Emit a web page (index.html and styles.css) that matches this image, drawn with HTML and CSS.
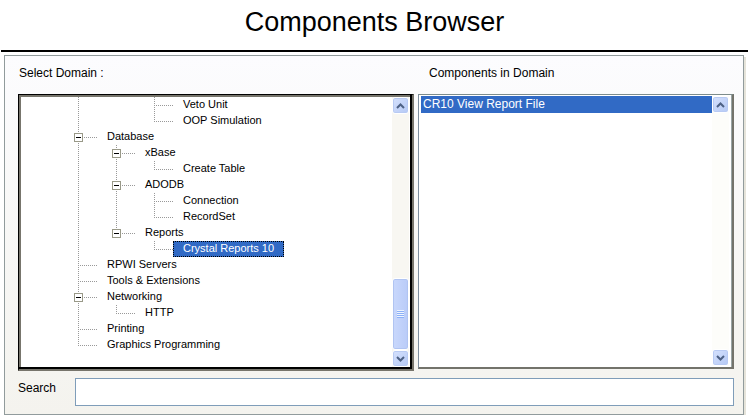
FILE: index.html
```html
<!DOCTYPE html>
<html lang="en">
<head>
<meta charset="utf-8">
<title>Components Browser</title>
<link rel="stylesheet" href="styles.css">
</head>
<body>
<h1>Components Browser</h1>
<main class="panel">
  <div class="lists">
    <section class="column">
      <h2>Select Domain :</h2>
      <div class="frame frame-tree">
        <ul class="tree">
          <li class="through"><ul><li class="bare"><ul>
            <li><div class="row"><span class="label">Veto Unit</span></div></li>
            <li><div class="row"><span class="label">OOP Simulation</span></div></li>
          </ul></li></ul></li>
          <li>
            <div class="row"><button class="toggle" aria-label="Collapse Database"></button><span class="label">Database</span></div>
            <ul>
              <li>
                <div class="row"><button class="toggle" aria-label="Collapse xBase"></button><span class="label">xBase</span></div>
                <ul><li><div class="row"><span class="label">Create Table</span></div></li></ul>
              </li>
              <li>
                <div class="row"><button class="toggle" aria-label="Collapse ADODB"></button><span class="label">ADODB</span></div>
                <ul>
                  <li><div class="row"><span class="label">Connection</span></div></li>
                  <li><div class="row"><span class="label">RecordSet</span></div></li>
                </ul>
              </li>
              <li>
                <div class="row"><button class="toggle" aria-label="Collapse Reports"></button><span class="label">Reports</span></div>
                <ul><li><div class="row"><span class="label selected">Crystal Reports 10</span></div></li></ul>
              </li>
            </ul>
          </li>
          <li><div class="row"><span class="label">RPWI Servers</span></div></li>
          <li><div class="row"><span class="label">Tools &amp; Extensions</span></div></li>
          <li>
            <div class="row"><button class="toggle" aria-label="Collapse Networking"></button><span class="label">Networking</span></div>
            <ul><li><div class="row"><span class="label">HTTP</span></div></li></ul>
          </li>
          <li><div class="row"><span class="label">Printing</span></div></li>
          <li><div class="row"><span class="label">Graphics Programming</span></div></li>
        </ul>
        <div class="scrollbar">
          <button class="arrow" aria-label="Scroll up"><svg viewBox="0 0 9 6"><path d="M1 5l3.500-3.500L8 5"/></svg></button>
          <div class="track"><div class="thumb"><span class="grip"></span></div></div>
          <button class="arrow" aria-label="Scroll down"><svg viewBox="0 0 9 6"><path d="M1 1l3.500 3.500L8 1"/></svg></button>
        </div>
      </div>
    </section>
    <section class="column">
      <h2 class="indent">Components in Domain</h2>
      <div class="frame frame-list">
        <ul class="items"><li>CR10 View Report File</li></ul>
        <div class="scrollbar">
          <button class="arrow" aria-label="Scroll up"><svg viewBox="0 0 9 6"><path d="M1 5l3.500-3.500L8 5"/></svg></button>
          <div class="track"></div>
          <button class="arrow" aria-label="Scroll down"><svg viewBox="0 0 9 6"><path d="M1 1l3.500 3.500L8 1"/></svg></button>
        </div>
      </div>
    </section>
  </div>
  <div class="search">
    <label for="search">Search</label>
    <input id="search" type="text">
  </div>
</main>
</body>
</html>
```
FILE: styles.css
```css
* { box-sizing: border-box; }
body {
  margin: 0;
  background: #fff;
  color: #000;
  font: 12px/16px "Liberation Sans", Arial, sans-serif;
}
h1 {
  margin: 0 0 3px 1px;
  padding: 6px 0 12px;
  border-bottom: 2px solid #000;
  font-size: 27px;
  font-weight: 400;
  line-height: 32px;
  text-align: center;
}
.panel {
  margin: 0 4px 0 4px;
  padding: 9px 9px 8px 13px;
  border: 1px solid #919b9c;
  background: linear-gradient(#fcfcfe, #f4f3ee);
  box-shadow: 2px 2px #e6e4da;
}
.lists { display: grid; grid-template-columns: 396fr 316fr; gap: 4px; }
.column { display: flex; flex-direction: column; min-width: 0; }
h2 {
  margin: 0 0 13px;
  padding-left: 1px;
  font-size: 12px;
  font-weight: 400;
  line-height: 16px;
}
h2.indent { padding-left: 11px; }
.frame { display: flex; flex: 1; background: #fff; }
.frame-tree {
  padding: 2px 3px 2px 2px;
  border: solid;
  border-width: 1px 2px 2px 1px;
  border-color: #000 #77756c #77756c #000;
  box-shadow: inset -2px -2px #000, inset 2px 2px #77756c;
}
.frame-list {
  margin-bottom: 2px;
  padding: 1px 3px 1px 2px;
  border: solid;
  border-width: 1px 2px 2px 1px;
  border-color: #7d8c8c #73736b #73736b #7f8f9f;
  box-shadow: inset -1px 0 #9aa5a5;
}
ul { margin: 0; padding: 0; list-style: none; }
.tree { flex: 1; padding-left: 53px; padding-bottom: 14px; font-size: 11px; }

/* Dotted connectors: a vertical trunk and a horizontal elbow per item. */
.tree li {
  background:
    repeating-linear-gradient(#999 0 1px, transparent 1px 2px) 4px 0 / 1px 100% no-repeat,
    repeating-linear-gradient(90deg, #999 0 1px, transparent 1px 2px) 4px 8px / 20px 1px no-repeat;
}
.tree li:last-child { background-size: 1px 9px, 20px 1px; }
.tree li.through { background-size: 1px 100%, 0 0; }
.tree li.bare { background: none; }
.tree ul { margin-left: 38px; }
.row { display: flex; align-items: center; height: 16px; }
.label {
  height: 16px;
  margin-left: 23px;
  padding: 0 9px;
  border: 1px solid transparent;
  line-height: 13px;
  white-space: nowrap;
}
.toggle {
  width: 9px;
  height: 9px;
  padding: 0;
  border: 1px solid #999988;
  background: linear-gradient(#000, #000) center / 5px 1px no-repeat #fff;
}
.toggle + .label { margin-left: 14px; }
.selected { border: 1px dotted #000; background: #316ac5; color: #fff; }
.items { flex: 1; }
.items li { padding-left: 2px; background: #316ac5; color: #fff; line-height: 17px; }

.scrollbar { display: flex; flex-direction: column; width: 17px; background: #f8f7f2; }
.frame-list .scrollbar { background: #fdfdfa; }
.arrow {
  display: flex;
  align-items: center;
  justify-content: center;
  height: 17px;
  padding: 0;
  border: 1px solid #fff;
  border-radius: 3px;
  background: linear-gradient(135deg, #d5e1fd, #b5c9f5);
  box-shadow: inset 0 0 0 1px #b8caf3;
}
.arrow svg { width: 9px; height: 6px; fill: none; stroke: #4d6185; stroke-width: 2; }
.track { display: flex; flex: 1; flex-direction: column; justify-content: flex-end; }
.thumb {
  display: flex;
  align-items: center;
  justify-content: center;
  height: 72px;
  border: 1px solid #fff;
  border-radius: 3px;
  background: linear-gradient(90deg, #c9d8fc, #b9cbf8);
  box-shadow: inset 0 0 0 1px #b0c4f2;
}
.grip { width: 7px; height: 8px; background: repeating-linear-gradient(#eef4fe 0 1px, #8cb0f8 1px 2px); }
.search { display: grid; grid-template-columns: 57px 1fr; margin-top: 7px; }
.search label { padding-top: 2px; }
.search input {
  height: 28px;
  padding: 0 4px;
  border: 1px solid #7f9db9;
  background: #fff;
  font: inherit;
}
```
